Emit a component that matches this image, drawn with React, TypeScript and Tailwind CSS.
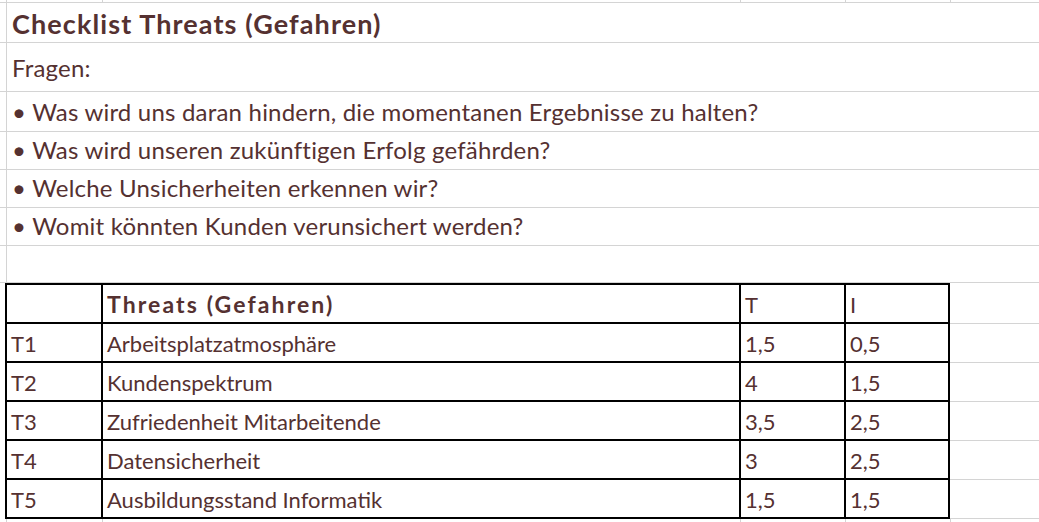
import React from "react";

const G = "border-[#d4d4d4]";

function TopStrip({ h }: { h: string }) {
  return (
    <div className={`flex ${h}`}>
      <div className={`w-[7px] border-r ${G}`} />
      <div className={`w-[96px] border-r ${G}`} />
      <div className={`w-[638px] border-r ${G}`} />
      <div className={`w-[105px] border-r ${G}`} />
      <div className={`w-[105px] border-r ${G}`} />
      <div className="flex-1" />
    </div>
  );
}

function SheetRow({
  h,
  children,
  pb,
}: {
  h: string;
  children?: React.ReactNode;
  pb: string;
}) {
  return (
    <div className={`flex ${h} border-b ${G}`}>
      <div className={`w-[7px] shrink-0 border-r ${G}`} />
      <div className={`flex flex-1 items-end pl-[5px] ${pb} whitespace-nowrap`}>
        {children}
      </div>
    </div>
  );
}

const rows = [
  ["T1", "Arbeitsplatzatmosphäre", "1,5", "0,5"],
  ["T2", "Kundenspektrum", "4", "1,5"],
  ["T3", "Zufriedenheit Mitarbeitende", "3,5", "2,5"],
  ["T4", "Datensicherheit", "3", "2,5"],
  ["T5", "Ausbildungsstand Informatik", "1,5", "1,5"],
];

function Cell({
  w,
  children,
  bold,
}: {
  w: string;
  children?: React.ReactNode;
  bold?: boolean;
}) {
  return (
    <div
      className={`${w} shrink-0 border-r-2 border-black flex items-end pl-[4px] pb-[6px] whitespace-nowrap ${
        bold ? "font-bold text-[23px] tracking-[2.1px]" : ""
      }`}
    >
      {children}
    </div>
  );
}

export default function App() {
  const bullets = [
    "Was wird uns daran hindern, die momentanen Ergebnisse zu halten?",
    "Was wird unseren zukünftigen Erfolg gefährden?",
    "Welche Unsicherheiten erkennen wir?",
    "Womit könnten Kunden verunsichert werden?",
  ];
  return (
    <div
      className="w-[1039px] h-[522px] overflow-hidden bg-white text-[#553131] text-[22px] leading-none"
      style={{ fontFamily: "Lato, 'Open Sans', sans-serif" }}
    >
      <TopStrip h="h-[3px] border-b border-[#d4d4d4]" />
      <SheetRow h="h-[40px]" pb="pb-[5px]">
        <span className="text-[27px] font-bold tracking-[1.1px]">
          Checklist Threats (Gefahren)
        </span>
      </SheetRow>
      <SheetRow h="h-[49px]" pb="pb-[11px]">
        <span className="text-[24px] tracking-[0.2px]">Fragen:</span>
      </SheetRow>
      {bullets.map((b, i) => (
        <SheetRow key={i} h={i === 0 ? "h-[40px]" : "h-[38px]"} pb="pb-[7px]">
          <span className="text-[24px] tracking-[0.2px]">
            <span className="mr-[6px]">•</span>
            {b}
          </span>
        </SheetRow>
      ))}
      <SheetRow h="h-[37px]" pb="pb-0" />
      <div className="flex">
        <div className="w-[5px] shrink-0" />
        <div className="w-[945px] shrink-0 border-l-2 border-t-2 border-black">
          <div className="flex h-[39px] border-b-2 border-black">
            <Cell w="w-[96px]" />
            <Cell w="w-[638px]" bold>
              Threats (Gefahren)
            </Cell>
            <Cell w="w-[105px]">T</Cell>
            <Cell w="w-[104px]">I</Cell>
          </div>
          {rows.map((r) => (
            <div key={r[0]} className="flex h-[39px] border-b-2 border-black">
              <Cell w="w-[96px]">{r[0]}</Cell>
              <Cell w="w-[638px]">{r[1]}</Cell>
              <Cell w="w-[105px]">{r[2]}</Cell>
              <Cell w="w-[104px]">{r[3]}</Cell>
            </div>
          ))}
        </div>
        <div className="flex-1 flex flex-col">
          <div className={`h-[41px] border-b ${G}`} />
          <div className={`h-[39px] border-b ${G}`} />
          <div className={`h-[39px] border-b ${G}`} />
          <div className={`h-[39px] border-b ${G}`} />
          <div className={`h-[39px] border-b ${G}`} />
          <div className={`h-[39px] border-b ${G}`} />
        </div>
      </div>
      <TopStrip h="h-[10px]" />
    </div>
  );
}
